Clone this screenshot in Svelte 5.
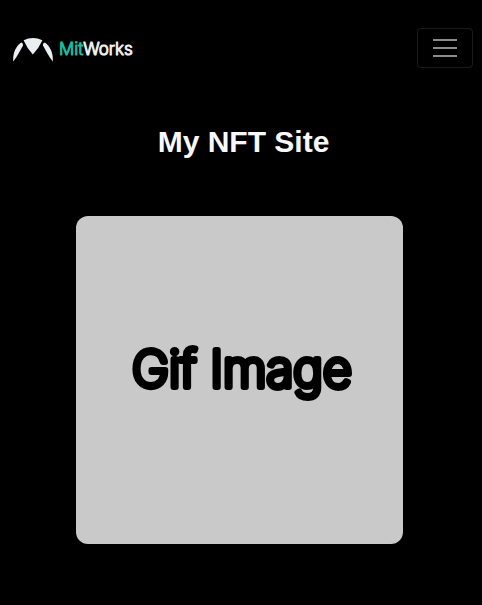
<script>
  let open = $state(false);
</script>

<div class="page">
  <header>
    <a class="brand" href="/" aria-label="MitWorks home">
      <svg class="mark" viewBox="0 0 40 24" aria-hidden="true">
        <path d="M10.6 2.2Q20 -2 29.4 2.2Q25.8 10.4 19.8 16.6Q14 10.2 10.6 2.2Z" />
        <path d="M8.2 4.6Q10.3 5 10 7.4C7.4 12.4 4.4 17.7 .2 23.6C-.3 15.6 2.4 8.6 8.2 4.6Z" />
        <path d="M31.8 4.6Q29.7 5 30 7.4C32.6 12.4 35.6 17.7 39.8 23.6C40.3 15.6 37.6 8.6 31.8 4.6Z" />
      </svg>
      <svg class="word" viewBox="0 0 78 24" aria-hidden="true">
        <text x="2" y="17"><tspan class="green">Mit</tspan><tspan>Works</tspan></text>
      </svg>
    </a>
    <button type="button" aria-label="Toggle navigation" aria-expanded={open} onclick={() => (open = !open)}>
      <svg viewBox="0 0 30 30" aria-hidden="true">
        <path d="M3 7h24M3 15h24M3 23h24" />
      </svg>
    </button>
  </header>

  <main>
    <h1>My NFT Site</h1>
    <div class="card">
      <svg viewBox="0 0 328 328" role="img" aria-label="Gif Image">
        <text x="166" y="171" text-anchor="middle">Gif Image</text>
      </svg>
    </div>
  </main>
</div>

<style>
  :global(body) {
    margin: 0;
    background: #000;
  }

  .page {
    min-height: 100vh;
    box-sizing: border-box;
    padding-bottom: 60px;
    font-family: "Liberation Sans", Arial, sans-serif;
    color: #f8f8fa;
  }

  header {
    display: flex;
    align-items: center;
    justify-content: space-between;
    padding: 28px 9px 0 13px;
  }

  .brand {
    display: flex;
    align-items: center;
    gap: 4px;
    padding-top: 4px;
    text-decoration: none;
  }

  .mark {
    width: 40px;
    height: 24px;
    fill: #eceff1;
  }

  .word {
    width: 78px;
    height: 24px;
    overflow: visible;
  }

  .word text {
    font: 300 17px "Inter", sans-serif;
    fill: #eceff1;
    stroke: #eceff1;
    stroke-width: 1px;
    stroke-linejoin: round;
  }

  .word .green {
    fill: #1abc9c;
    stroke: #1abc9c;
  }

  button {
    display: flex;
    align-items: center;
    justify-content: center;
    width: 56px;
    height: 40px;
    padding: 0;
    background: transparent;
    border: 1px solid rgba(255, 255, 255, 0.1);
    border-radius: 4px;
    cursor: pointer;
  }

  button svg {
    width: 30px;
    height: 30px;
    fill: none;
    stroke: rgba(255, 255, 255, 0.55);
    stroke-width: 2px;
  }

  main {
    display: flex;
    flex-direction: column;
    align-items: center;
    padding: 56px 3px 0 0;
  }

  h1 {
    margin: 0;
    padding-left: 8px;
    font-size: 30px;
    line-height: 36px;
    font-weight: 700;
  }

  .card {
    width: 68vw;
    max-width: 480px;
    margin-top: 56px;
    background: #c9c9c9;
    border-radius: 12px;
    overflow: hidden;
  }

  .card svg {
    display: block;
    width: 100%;
  }

  .card text {
    font: 200 50px "Inter", sans-serif;
    fill: #000;
    stroke: #000;
    stroke-width: 6px;
    stroke-linejoin: round;
    stroke-linecap: round;
  }
</style>
